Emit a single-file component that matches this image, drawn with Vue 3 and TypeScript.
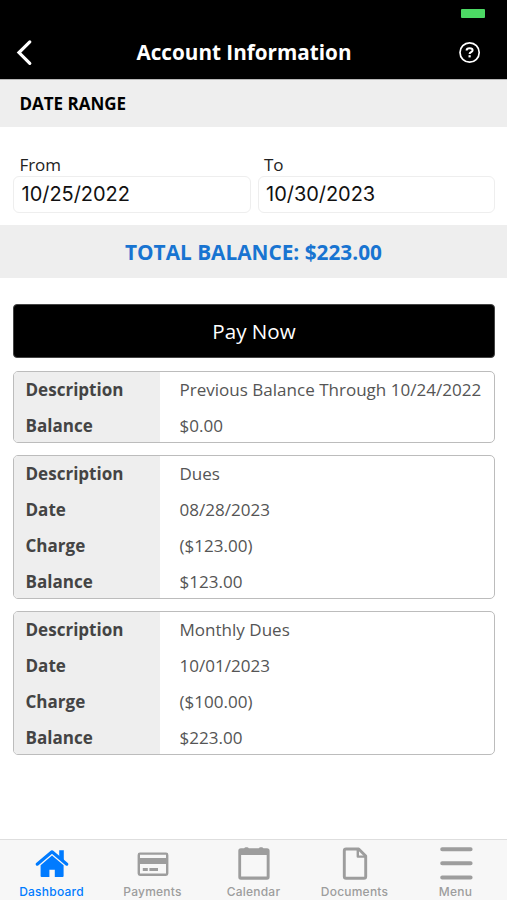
<script setup lang="ts">
interface Row {
  label: string
  value: string
}

const fields: Row[] = [
  { label: 'From', value: '10/25/2022' },
  { label: 'To', value: '10/30/2023' },
]

const entries: Row[][] = [
  [
    { label: 'Description', value: 'Previous Balance Through 10/24/2022' },
    { label: 'Balance', value: '$0.00' },
  ],
  [
    { label: 'Description', value: 'Dues' },
    { label: 'Date', value: '08/28/2023' },
    { label: 'Charge', value: '($123.00)' },
    { label: 'Balance', value: '$123.00' },
  ],
  [
    { label: 'Description', value: 'Monthly Dues' },
    { label: 'Date', value: '10/01/2023' },
    { label: 'Charge', value: '($100.00)' },
    { label: 'Balance', value: '$223.00' },
  ],
]

const tabs: string[] = ['Dashboard', 'Payments', 'Calendar', 'Documents', 'Menu']
</script>

<template>
  <div class="screen">
    <header class="header">
      <div class="status"><span class="battery"></span></div>
      <div class="nav">
        <button class="nav-btn" aria-label="Back">
          <svg width="20" height="30" viewBox="0 0 20 30" fill="none" stroke="#fff" stroke-width="3.2" stroke-linecap="round" stroke-linejoin="miter">
            <path d="M14.8 3.9 4 14.6 14.8 25.4" />
          </svg>
        </button>
        <h1 class="title">Account Information</h1>
        <button class="nav-btn help" aria-label="Help">
          <svg width="24" height="24" viewBox="0 0 24 24" fill="none" stroke="#fff">
            <circle cx="12.6" cy="11.5" r="9.6" stroke-width="1.7" />
            <path d="M9.6 9.5c0-1.5 1.3-2.3 3-2.3s3 .8 3 2.1c0 1.9-3 1.9-3 3.8" stroke-width="2" />
            <rect x="11.5" y="14.2" width="2.2" height="2.2" fill="#fff" stroke="none" />
          </svg>
        </button>
      </div>
    </header>

    <h2 class="section">DATE RANGE</h2>

    <div class="fields">
      <div v-for="field in fields" :key="field.label" class="field">
        <span class="field-label">{{ field.label }}</span>
        <div class="field-input">{{ field.value }}</div>
      </div>
    </div>

    <div class="total"><span>TOTAL BALANCE: $223.00</span></div>

    <main class="content">
      <button class="pay">Pay Now</button>
      <section v-for="(entry, i) in entries" :key="i" class="card">
        <div class="rows">
          <div v-for="row in entry" :key="row.label" class="row">
            <span class="row-label">{{ row.label }}</span>
            <span class="row-value">{{ row.value }}</span>
          </div>
        </div>
      </section>
    </main>

    <nav class="tabs">
      <div v-for="(tab, i) in tabs" :key="tab" class="tab" :class="{ active: i === 0 }">
        <svg class="tab-icon" width="36" height="36" viewBox="0 0 36 36">
          <g v-if="tab === 'Dashboard'" fill="currentColor">
            <path d="M3.2 18.2 18 5.8l14.8 12.4" fill="none" stroke="currentColor" stroke-width="3.1" stroke-linecap="round" stroke-linejoin="round" />
            <path d="M25.2 4.3h4.6v11.2l-4.6-3.8z" />
            <path d="M18 9.6 29.6 19.3v10.6a1 1 0 0 1-1 1h-7.8v-7.2h-5.4v7.2H7.6a1 1 0 0 1-1-1V19.3z" />
          </g>
          <g v-else-if="tab === 'Payments'" fill="currentColor">
            <path fill-rule="evenodd" d="M5 6.6h26a2.4 2.4 0 0 1 2.4 2.4v18.6a2.4 2.4 0 0 1-2.4 2.4H5a2.4 2.4 0 0 1-2.4-2.4V9A2.4 2.4 0 0 1 5 6.6Zm0 2.2v3.3h26V8.8Zm0 9.2v9.5h26V18Z" />
            <path d="M7.8 21.9h5v3h-5zM14.4 21.9h8.6v3h-8.6z" />
          </g>
          <g v-else-if="tab === 'Calendar'" fill="currentColor">
            <path fill-rule="evenodd" d="M4.9 2.3h3.2c.4-1.5 4.4-1.5 4.8 0h9.8c.4-1.5 4.4-1.5 4.8 0h3.5a2.6 2.6 0 0 1 2.6 2.6v26.2a2.6 2.6 0 0 1-2.6 2.6H4.9a2.6 2.6 0 0 1-2.6-2.6V4.9a2.6 2.6 0 0 1 2.6-2.6Zm.2 6.6v21.7h25.6V8.9Z" />
          </g>
          <g v-else-if="tab === 'Documents'" fill="none" stroke="currentColor" stroke-width="2.9" stroke-linejoin="round">
            <path d="M9.1 3h12.6l7 7v20.4a1.8 1.8 0 0 1-1.8 1.8H9.1a1.8 1.8 0 0 1-1.8-1.8V4.8A1.8 1.8 0 0 1 9.1 3Z" />
            <path d="M20.8 3.4v7.2h7.6" stroke-width="2.4" />
          </g>
          <g v-else stroke="currentColor" stroke-width="4" stroke-linecap="round">
            <path d="M4.2 3.2h28.4M4.2 17.3h28.4M4.2 31.4h28.4" />
          </g>
        </svg>
        <span class="tab-label">{{ tab }}</span>
      </div>
    </nav>
  </div>
</template>

<style>
body {
  margin: 0;
  background: #fff;
}
</style>

<style scoped>
* {
  box-sizing: border-box;
}
.screen {
  display: flex;
  flex-direction: column;
  width: 507px;
  height: 900px;
  overflow: hidden;
  background: #fff;
  font-family: 'Open Sans', 'Noto Sans', sans-serif;
  color: #222;
}
.header {
  flex: none;
  height: 79px;
  background: #000;
}
.status {
  display: flex;
  justify-content: flex-end;
  height: 26px;
  padding: 9px 22px 0 0;
}
.battery {
  width: 24px;
  height: 9px;
  border-radius: 1px;
  background: #4cd964;
}
.nav {
  display: grid;
  grid-template-columns: 50px 1fr 69px;
  align-items: center;
  height: 53px;
}
.nav-btn {
  display: flex;
  align-items: center;
  padding: 0 0 0 15px;
  border: 0;
  background: none;
}
.help {
  padding: 0 0 0 19px;
}
.title {
  margin: 0;
  padding-bottom: 2px;
  text-align: center;
  color: #fff;
  font-size: 20.7px;
  font-weight: 700;
  line-height: 28px;
  white-space: nowrap;
}
.section {
  flex: none;
  height: 48px;
  margin: 0;
  padding-left: 19.4px;
  border-top: 1px solid #b8b8b8;
  background: #eee;
  color: #000;
  font-size: 17px;
  font-weight: 700;
  line-height: 47px;
}
.fields {
  display: flex;
  flex: none;
  gap: 7px;
  height: 98px;
  padding: 25px 12px 0 13px;
}
.field {
  flex: 1;
}
.field-label {
  display: block;
  height: 24px;
  padding-left: 6.4px;
  font-size: 17px;
  line-height: 26px;
}
.field-input {
  height: 37px;
  padding-left: 7.6px;
  border: 1px solid #eee;
  border-radius: 6px;
  color: #111;
  font-family: Inter, sans-serif;
  font-size: 20px;
  letter-spacing: -0.05px;
  line-height: 34px;
}
.total {
  flex: none;
  height: 53px;
  background: #eee;
  color: #1874d1;
  text-align: center;
  font-size: 20.8px;
  font-weight: 700;
  line-height: 55px;
}
.content {
  display: flex;
  flex: 1;
  flex-direction: column;
  padding: 26px 12px 0 13px;
}
.pay {
  height: 54px;
  margin-bottom: 13px;
  padding: 0;
  border: 1px solid #444;
  border-radius: 4px;
  background: #000;
  color: #fff;
  font-family: inherit;
  font-size: 20.6px;
  line-height: 53px;
}
.card {
  margin-bottom: 12.8px;
  overflow: hidden;
  border: 1px solid #bcbcbc;
  border-radius: 5px;
}
.rows {
  margin: -1px 0;
}
.row {
  display: grid;
  grid-template-columns: 146px 1fr;
  height: 35.8px;
  font-size: 17.05px;
  line-height: 37.2px;
  white-space: nowrap;
}
.row-label {
  height: 35.8px;
  padding-left: 11.5px;
  background: #eee;
  color: #444;
  font-weight: 700;
}
.row-value {
  padding-left: 19.5px;
  color: #555;
}
.tabs {
  display: grid;
  flex: none;
  grid-template-columns: repeat(5, 101px);
  justify-content: center;
  height: 61px;
  border-top: 1px solid #dedede;
  background: #f7f7f7;
}
.tab {
  display: flex;
  flex-direction: column;
  align-items: center;
  padding-top: 6px;
  color: #9d9d9d;
}
.tab.active {
  color: #007bff;
}
.tab-icon {
  display: block;
}
.tab-label {
  font-family: Inter, sans-serif;
  font-size: 12px;
  font-weight: 500;
  letter-spacing: 0.22px;
  line-height: 18px;
  margin-top: 1px;
}
</style>
